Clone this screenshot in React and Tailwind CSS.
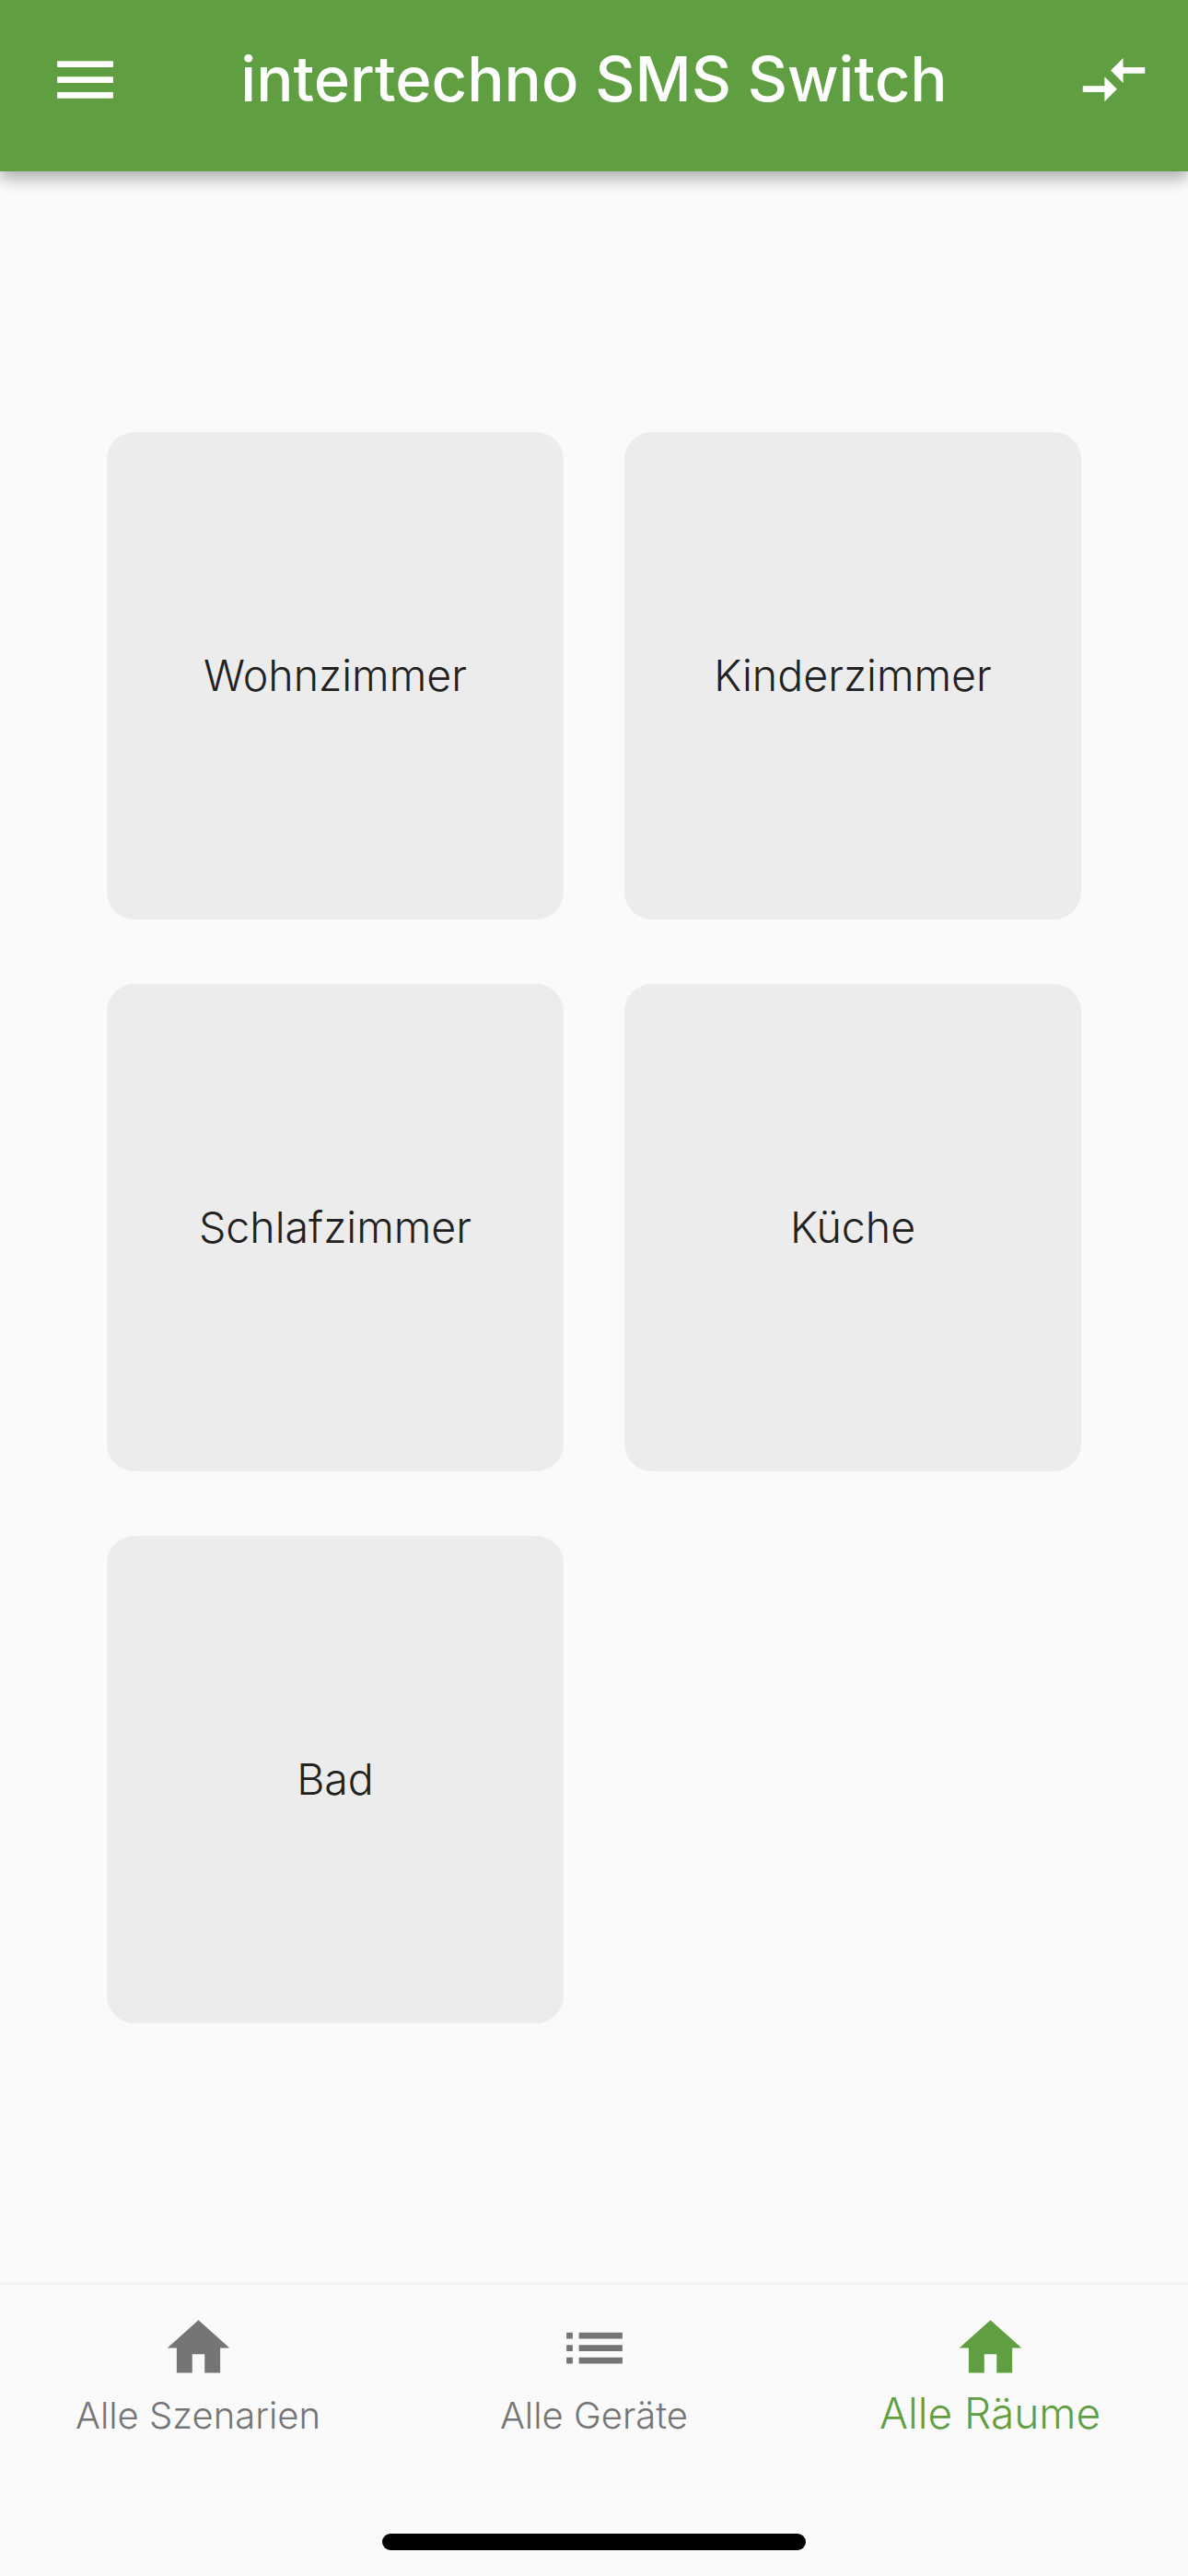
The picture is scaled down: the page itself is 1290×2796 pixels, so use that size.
const rooms = ["Wohnzimmer", "Kinderzimmer", "Schlafzimmer", "Küche", "Bad"];

const HOME = "M10 20v-6h4v6h5v-8h3L12 3 2 12h3v8z";
const LIST = "M3 13h2v-2H3v2zm0 4h2v-2H3v2zm0-8h2V7H3v2zm4 4h14v-2H7v2zm0 4h14v-2H7v2zM7 7v2h14V7H7z";
const MENU = "M3 18h18v-2H3v2zm0-5h18v-2H3v2zm0-7v2h18V6H3z";
const COMPARE = "M9.01 14H2v2h7.01v3L13 15l-3.99-4v3zm5.98-1v-3H22V8h-7.01V5L11 9l3.99 4z";

function Icon({ d, className }) {
  return (
    <svg viewBox="0 0 24 24" fill="currentColor" className={className}>
      <path d={d} />
    </svg>
  );
}

function Tab({ icon, label, active }) {
  return (
    <div className={"flex-1 flex flex-col items-center " + (active ? "text-[#5f9f41]" : "text-[#757575]")}>
      <Icon d={icon} className="w-[81px] h-[81px]" />
      <span className={active ? "text-[46px] font-light leading-[54px] mt-[3px]" : "text-[40px] font-light leading-[46px] mt-[10px]"}>
        {label}
      </span>
    </div>
  );
}

export default function App() {
  return (
    <div className="flex flex-col h-[2796px] bg-[#fafafa] font-['Inter',sans-serif]">
      <header className="relative z-10 h-[186px] bg-[#5f9f41] text-white flex items-start pl-[52px] pr-[40px] pt-[46px] shadow-[0_8px_16px_rgba(0,0,0,0.3)]">
        <Icon d={MENU} className="w-[81px] h-[81px]" />
        <h1 className="flex-1 text-center pr-[12px] text-[67px] leading-[80px] font-medium">intertechno SMS Switch</h1>
        <Icon d={COMPARE} className="w-[81px] h-[81px]" />
      </header>

      <main className="flex-1 px-[116px] pt-[283px]">
        <div className="grid grid-cols-2 gap-x-[66px] gap-y-[70px]">
          {rooms.map((room) => (
            <div
              key={room}
              className="h-[529px] rounded-[30px] bg-[#ececec] flex items-center justify-center text-[46.5px] font-light text-[#212121]"
            >
              {room}
            </div>
          ))}
        </div>
      </main>

      <footer className="h-[318px] flex flex-col border-t-2 border-[#f3f3f3] pt-[28px]">
        <div className="flex">
          <Tab icon={HOME} label="Alle Szenarien" />
          <Tab icon={LIST} label="Alle Geräte" />
          <Tab icon={HOME} label="Alle Räume" active />
        </div>
        <div className="mt-auto mb-[28px] mx-auto w-[460px] h-[18px] rounded-full bg-black" />
      </footer>
    </div>
  );
}
